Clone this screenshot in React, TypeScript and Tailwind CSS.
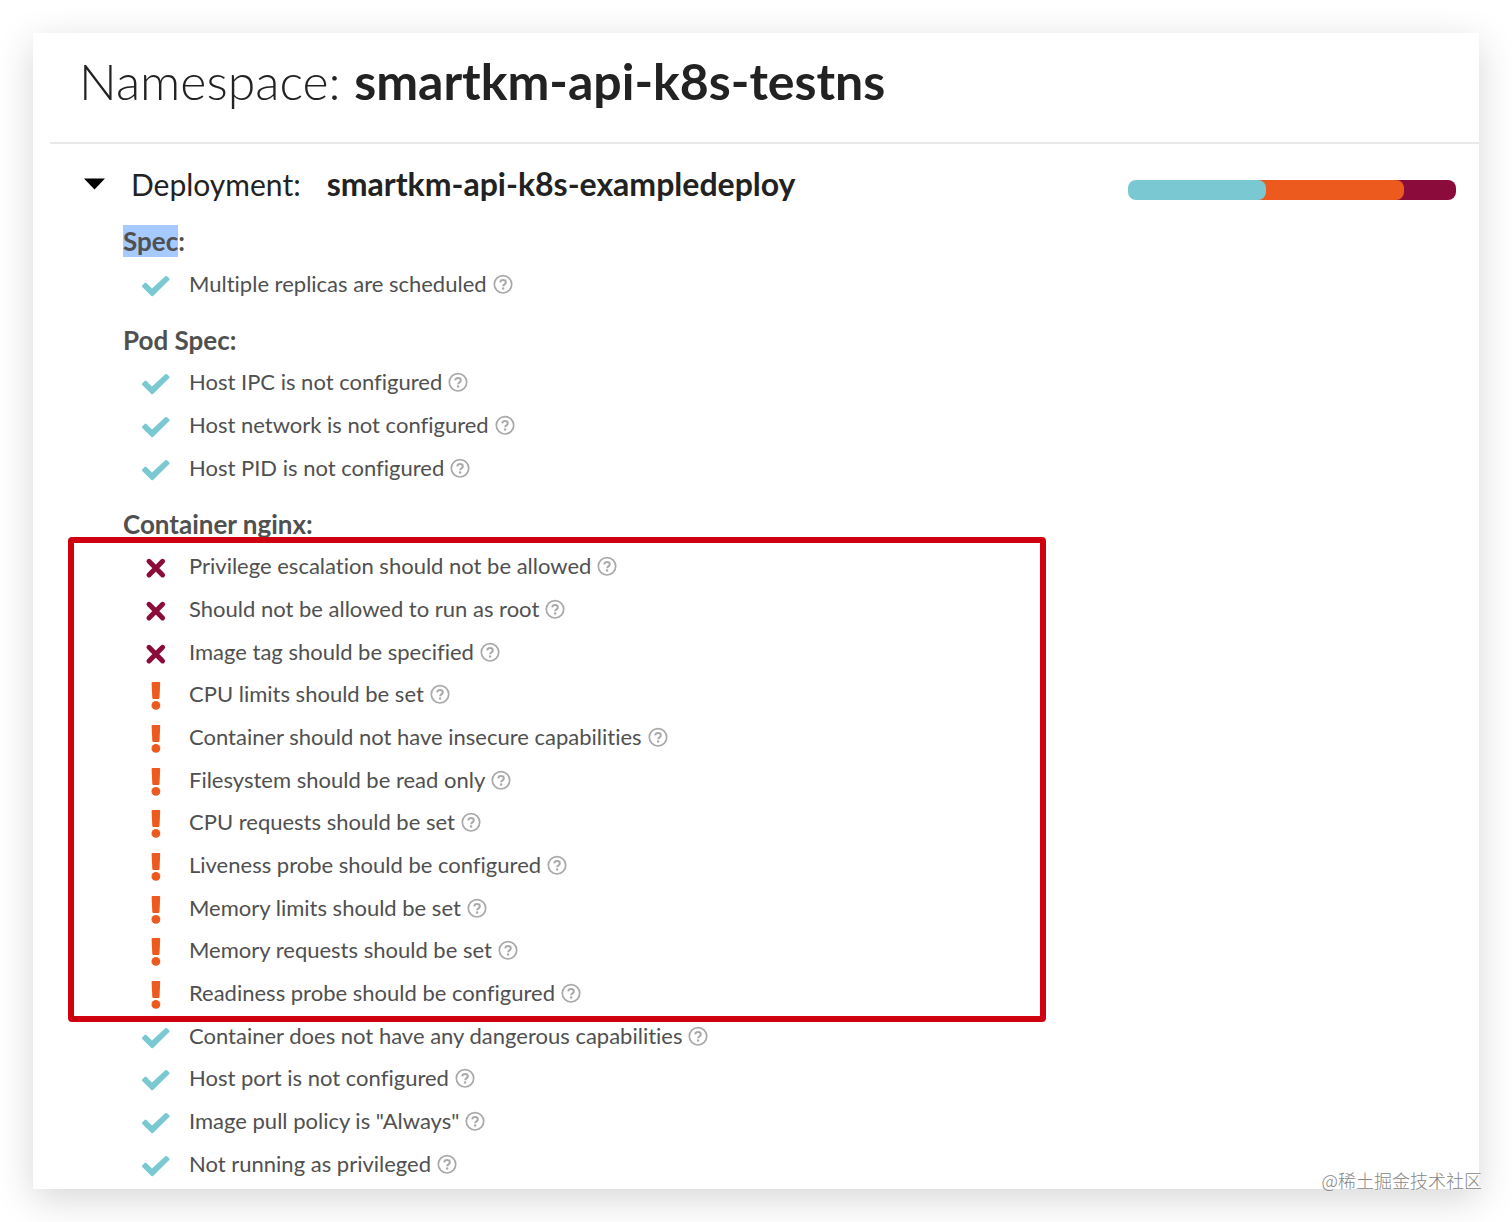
import clsx from "clsx";

type Status = "success" | "danger" | "warning";

interface Check {
  status: Status;
  message: string;
}

const SPEC: Check[] = [{ status: "success", message: "Multiple replicas are scheduled" }];

const POD_SPEC: Check[] = [
  { status: "success", message: "Host IPC is not configured" },
  { status: "success", message: "Host network is not configured" },
  { status: "success", message: "Host PID is not configured" },
];

const CONTAINER: Check[] = [
  { status: "danger", message: "Privilege escalation should not be allowed" },
  { status: "danger", message: "Should not be allowed to run as root" },
  { status: "danger", message: "Image tag should be specified" },
  { status: "warning", message: "CPU limits should be set" },
  { status: "warning", message: "Container should not have insecure capabilities" },
  { status: "warning", message: "Filesystem should be read only" },
  { status: "warning", message: "CPU requests should be set" },
  { status: "warning", message: "Liveness probe should be configured" },
  { status: "warning", message: "Memory limits should be set" },
  { status: "warning", message: "Memory requests should be set" },
  { status: "warning", message: "Readiness probe should be configured" },
  { status: "success", message: "Container does not have any dangerous capabilities" },
  { status: "success", message: "Host port is not configured" },
  { status: "success", message: 'Image pull policy is "Always"' },
  { status: "success", message: "Not running as privileged" },
];

function StatusIcon({ status }: { status: Status }) {
  return (
    <svg viewBox="0 0 32 32" className="mt-1 size-8 shrink-0" aria-hidden="true">
      {status === "success" && (
        <path
          d="M2.4 15.2 4.6 13q.9-.8 1.8 0l5.6 5.6L25.2 6.3q.9-.8 1.8 0l2.2 2q.8.9 0 1.8L13.1 25.9q-.9.8-1.8 0L2.3 17q-.8-.9.1-1.8Z"
          fill="#79c8d2"
        />
      )}
      {status === "danger" && (
        <path d="M9 9.3 22.6 22.9M22.6 9.3 9 22.9" stroke="#8b0c3a" strokeWidth="5" strokeLinecap="round" />
      )}
      {status === "warning" && (
        <g fill="#ec5a1d">
          <path d="M12.6 2h6.6q1 0 1 1l-.7 15q-.1 1.1-1.2 1.1h-4.8q-1.1 0-1.2-1.1l-.7-15q0-1 1-1Z" />
          <circle cx="15.9" cy="25.4" r="4.4" />
        </g>
      )}
    </svg>
  );
}

function HelpLink({ topic }: { topic: string }) {
  return (
    <a href="#" aria-label={`Help: ${topic}`} className="ml-1.5 shrink-0">
      <svg viewBox="0 0 20 20" className="size-5" fill="none" stroke="#a9a9a9" aria-hidden="true">
        <circle cx="10" cy="10.3" r="8.7" strokeWidth="1.7" />
        <path d="M7.2 8.4C7.5 6.9 8.6 6.1 10 6.1c1.6 0 2.8.9 2.8 2.3 0 2-2.6 1.9-2.6 3.8" strokeWidth="2" />
        <circle cx="10.1" cy="14.5" r="1.2" fill="#a9a9a9" stroke="none" />
      </svg>
    </a>
  );
}

function CheckList({ checks, className }: { checks: Check[]; className: string }) {
  return (
    <ul className={clsx("grid auto-rows-fr pl-[17px]", className)}>
      {checks.map((c) => (
        <li key={c.message} className="flex items-center text-[22px] leading-8 text-[#505050]">
          <StatusIcon status={c.status} />
          <span className="ml-[17px]">{c.message}</span>
          <HelpLink topic={c.message} />
        </li>
      ))}
    </ul>
  );
}

function ScoreBar() {
  return (
    <div className="mt-3 mr-[23px] w-[328px] shrink-0 rounded-lg bg-linear-to-r from-transparent from-50% to-[#8b0c3a] to-50%">
      <div className="w-[84%] rounded-lg bg-linear-to-r from-transparent from-25% to-[#ec5a1d] to-25%">
        <div className="h-5 w-1/2 rounded-lg bg-[#79c8d2]" />
      </div>
    </div>
  );
}

const SECTION_TITLE = "text-[26px] leading-8 font-bold text-[#505050] mb-[5px]";

export default function App() {
  return (
    <div className="relative bg-white p-[33px] font-[Lato,'Noto_Sans',sans-serif] [font-variant-ligatures:none]">
      <main className="bg-white pb-1 shadow-[0_10px_36px_rgba(0,0,0,0.16)]">
        <h1 className="ml-[17px] border-b-2 border-[#e9e9e9] pt-4 pb-[29px] pl-[29px] text-[50px] leading-16 font-light text-[#222]">
          Namespace: <strong className="font-bold">smartkm-api-k8s-testns</strong>
        </h1>

        <div className="mt-[18px] flex h-11 items-center justify-between">
          <h2 className="flex items-center text-[30px] leading-11 text-[#222]">
            <button type="button" aria-label="Collapse deployment" aria-expanded="true" className="ml-[51px] mr-[26px]">
              <svg viewBox="0 0 21 12" className="h-3 w-[21px]" aria-hidden="true">
                <path d="M0 .5h21L10.5 11.5Z" fill="#000" />
              </svg>
            </button>
            Deployment:
            <strong className="ml-[26px] text-[32px] font-bold">smartkm-api-k8s-exampledeploy</strong>
          </h2>
          <ScoreBar />
        </div>

        <div className="ml-[90px] pt-[19px]">
          <h3 className={SECTION_TITLE}>
            <mark className="inline-block bg-[#a6caff] text-inherit">Spec</mark>:
          </h3>
          <CheckList checks={SPEC} className="min-h-[43px]" />

          <h3 className={clsx(SECTION_TITLE, "mt-[19px]")}>Pod Spec:</h3>
          <CheckList checks={POD_SPEC} className="min-h-32" />

          <h3 className={clsx(SECTION_TITLE, "mt-[19px]")}>Container nginx:</h3>
          <div className="relative">
            <CheckList checks={CONTAINER} className="min-h-160" />
            {/* outline around the failing checks */}
            <div className="pointer-events-none absolute -top-2 -left-[55px] h-[485px] w-[978px] rounded-sm border-6 border-[#cf000f]" />
          </div>
        </div>
      </main>
      <p className="absolute right-[30px] bottom-7 font-['Noto_Sans_CJK_SC',sans-serif] text-[18px] leading-7 font-light text-[#858585] [text-shadow:0_0_2px_#fff]">
        @稀土掘金技术社区
      </p>
    </div>
  );
}
